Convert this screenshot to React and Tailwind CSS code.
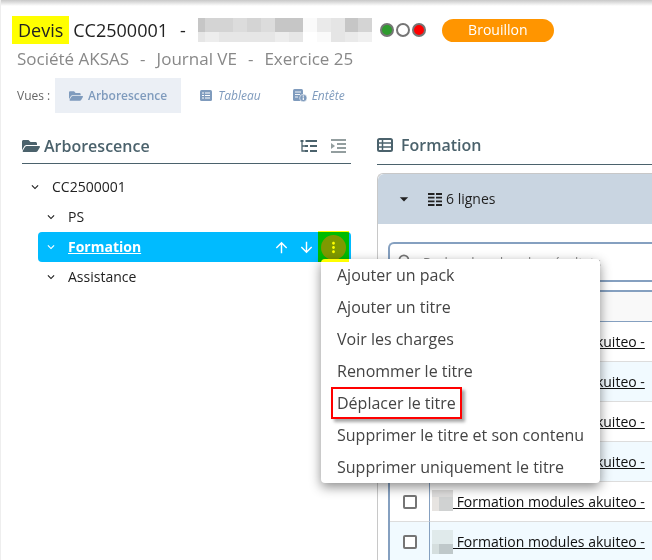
import { FaFolderOpen } from "react-icons/fa";
import { MdArrowUpward, MdArrowDownward, MdMoreVert, MdSearch, MdKeyboardArrowDown, MdArrowDropDown } from "react-icons/md";

const menuItems = [
  "Ajouter un pack",
  "Ajouter un titre",
  "Voir les charges",
  "Renommer le titre",
  "Déplacer le titre",
  "Supprimer le titre et son contenu",
  "Supprimer uniquement le titre",
];

const lines = [1, 2, 3, 4, 5, 6];

function ListIcon({ className }) {
  return (
    <svg viewBox="0 0 16 14" className={className} fill="none" stroke="currentColor" aria-hidden="true">
      <rect x="1" y="1" width="14" height="12" rx="1.5" strokeWidth="2" />
      <path d="M5.5 1v12M1 5h14M1 9h14" strokeWidth="1.5" />
    </svg>
  );
}

function SolidListIcon({ className }) {
  return (
    <svg viewBox="0 0 12 11" className={className} aria-hidden="true">
      <rect width="12" height="11" rx="1.5" fill="currentColor" />
      <path d="M2 3h2M5 3h5M2 5.500h2M5 5.500h5M2 8h2M5 8h5" stroke="#fff" strokeWidth="1.200" />
    </svg>
  );
}

function HeaderDocIcon({ className }) {
  return (
    <svg viewBox="0 0 14 13" className={className} aria-hidden="true">
      <rect width="10" height="12" rx="1.5" fill="currentColor" />
      <path d="M2 3h6M2 5.500h5M2 8h3" stroke="#fff" strokeWidth="0.900" />
      <circle cx="10.300" cy="9" r="3.700" fill="currentColor" stroke="#fff" strokeWidth="0.600" />
      <path d="M10.300 8.500v2.600M10.300 6.600v1.100" stroke="#fff" strokeWidth="1.200" />
    </svg>
  );
}

function TreeIcon({ className }) {
  return (
    <svg viewBox="0 0 17 14" className={className} stroke="currentColor" fill="none" aria-hidden="true">
      <path d="M2 1v11h4M2 7h4" strokeWidth="1.300" />
      <path d="M0.500 2h3M5 7h3M5 12h3M5.500 2H17M10 7h7M10 12h7" strokeWidth="2" />
    </svg>
  );
}

function IndentIcon({ className }) {
  return (
    <svg viewBox="0 0 15 14" className={className} stroke="currentColor" fill="none" aria-hidden="true">
      <path d="M0 1h15M6 5h9M6 9h9M0 13h15" strokeWidth="1.800" />
      <path d="M0 4l4 3-4 3z" fill="currentColor" stroke="none" />
    </svg>
  );
}

function LinesIcon({ className }) {
  return (
    <svg viewBox="0 0 14 13" className={className} stroke="currentColor" aria-hidden="true">
      <path d="M0 1h6.500M0 4.700h6.500M0 8.300h6.500M0 12h6.500M8 1h6M8 4.700h6M8 8.300h6M8 12h6" strokeWidth="1.800" />
    </svg>
  );
}

function TitleMask() {
  return (
    <svg viewBox="0 0 174 24" className="h-6 w-[174px]" shapeRendering="crispEdges" aria-hidden="true">
      <path fill="#d4d4d4" d="M7 0h28v14H7zM49 0h14v14H49zM167 0h7v14h-7z" />
      <path fill="#c6c6c6" d="M0 0h7v14H0zM77 0h28v14H77zM147 0h13v14h-13z" />
      <path fill="#dcdcdc" d="M35 0h14v14H35zM63 0h14v14H63z" />
      <path fill="#d4d4d4" d="M160 0h14v14h-14z" />
      <path fill="#e6e6e6" d="M0 14h7v10H0zM21 14h56v10H21zM91 14h14v10H91z" />
      <path fill="#ededed" d="M7 14h14v10H7zM77 14h14v10H77z" />
      <path fill="#fafafa" d="M105 0h14v14h-14zM119 14h14v10h-14z" />
      <path fill="#eaeaea" d="M119 0h14v14h-14zM147 14h13v10h-13z" />
      <path fill="#e5e5e5" d="M133 0h14v24h-14z" />
      <path fill="#f0f0f0" d="M160 14h14v10h-14z" />
    </svg>
  );
}

function CodeMask({ tinted }) {
  return (
    <svg viewBox="0 0 21 24" className="h-6 w-[21px] shrink-0" shapeRendering="crispEdges" aria-hidden="true">
      <path fill={tinted ? "#e0eaeb" : "#dddcdb"} d="M0 0h21v14H0z" />
      <path fill={tinted ? "#d5dede" : "#e7e4e1"} d={tinted ? "M0 14h7v10H0z" : "M0 7h7v14H0z"} />
      <path fill={tinted ? "#bfc8ca" : "#d0d2d2"} d={tinted ? "M7 14h14v10H7z" : "M7 7h14v14H7z"} />
    </svg>
  );
}

function TreeRow({ label, className }) {
  return (
    <li className={`flex h-[30px] items-center text-[#222] ${className}`}>
      <button type="button" aria-label={`Replier ${label}`} className="w-6">
        <MdKeyboardArrowDown className="size-[14px]" />
      </button>
      <span>{label}</span>
    </li>
  );
}

function ContextMenu() {
  return (
    <ul className="absolute top-[27px] left-[3px] z-10 w-[279px] rounded-sm bg-white text-base font-normal text-[#444] shadow-[0_4px_12px_rgba(0,0,0,0.45)]">
      {menuItems.map((item) => (
        <li key={item} className="flex h-8 items-center px-[10px]">
          <button
            type="button"
            className={
              item === "Déplacer le titre"
                ? "h-8 border-2 border-[#f00] px-1 whitespace-nowrap shadow-[3px_3px_3px_rgba(0,0,0,0.35)]"
                : "h-8 px-[6px] whitespace-nowrap"
            }
          >
            {item}
          </button>
        </li>
      ))}
    </ul>
  );
}

export default function App() {
  return (
    <div className="h-screen overflow-hidden border-l border-[#eee] bg-white font-['Open_Sans','Noto_Sans',sans-serif] text-sm">
      <div className="h-[6px] bg-gradient-to-b from-[#c8c8c8] to-white" />

      <header className="px-[11px] pt-[10px]">
        <div className="flex h-7 items-center text-lg text-[#222]">
          <h1 className="flex items-center gap-1">
            <span className="h-7 bg-[#ff0] px-[6px]">Devis</span>
            <span>CC2500001</span>
            <span className="pl-2">-</span>
          </h1>
          <div className="pl-3">
            <TitleMask />
          </div>
          <div className="flex gap-[2px] pl-2">
            <span className="size-[14px] rounded-full border-2 border-[#757575] bg-[#2e9b2e]" />
            <span className="size-[14px] rounded-full border-2 border-[#757575] bg-white" />
            <span className="size-[14px] rounded-full border-2 border-[#757575] bg-[#f00]" />
          </div>
          <span className="ml-4 flex h-[23px] w-28 items-center justify-center rounded-full bg-[#ff9500] text-sm text-white">
            Brouillon
          </span>
        </div>
        <p className="flex gap-[11px] px-[5px] pt-[3px] text-[17px] leading-6 text-[#888]">
          <span>Société AKSAS</span>
          <span>-</span>
          <span>Journal VE</span>
          <span>-</span>
          <span>Exercice 25</span>
        </p>
        <nav className="flex items-center px-[5px] pt-[7px] text-xs text-[#7f9bbd]">
          <span className="w-[38px] text-[#666]">Vues :</span>
          <button type="button" className="flex h-[35px] items-center gap-[5px] bg-[#ebeff5] px-[14px] font-semibold">
            <FaFolderOpen className="size-[14px]" />
            Arborescence
          </button>
          <button type="button" className="flex h-[35px] items-center gap-[6px] pl-[19px] italic">
            <SolidListIcon className="h-[11px] w-3" />
            Tableau
          </button>
          <button type="button" className="flex h-[35px] items-center gap-[5px] pl-8 italic">
            <HeaderDocIcon className="h-[13px] w-[14px]" />
            Entête
          </button>
        </nav>
      </header>

      <main className="flex gap-[26px] pt-5 pl-[21px]">
        <section className="w-[329px] shrink-0">
          <div className="flex h-[31px] items-center border-b border-[#4b626c] pb-1 text-[#4b626c]">
            <FaFolderOpen className="size-[18px]" />
            <h2 className="flex-1 pl-1 text-base font-semibold">Arborescence</h2>
            <button type="button" aria-label="Tout déplier">
              <TreeIcon className="h-[14px] w-[17px]" />
            </button>
            <button type="button" aria-label="Indenter" className="pr-[5px] pl-[14px] text-[#939e9f]">
              <IndentIcon className="h-[14px] w-[15px]" />
            </button>
          </div>

          <ul className="pt-2">
            <TreeRow label="CC2500001" className="pl-[6px]" />
            <TreeRow label="PS" className="pl-[22px]" />
            <li className="ml-4 flex h-[30px] items-center rounded-sm bg-[#0bf] pl-[6px] font-bold text-white">
              <button type="button" aria-label="Replier Formation" className="w-6">
                <MdKeyboardArrowDown className="size-[14px]" />
              </button>
              <a href="#formation" className="flex-1 underline">Formation</a>
              <button type="button" aria-label="Monter" className="px-1">
                <MdArrowUpward className="size-[17px]" />
              </button>
              <button type="button" aria-label="Descendre" className="pr-[3px] pl-1">
                <MdArrowDownward className="size-[17px]" />
              </button>
              <div className="relative mr-[2px] flex h-[30px] w-[31px] items-center justify-center">
                <button type="button" aria-label="Plus d'actions" className="flex size-[25px] items-center justify-center rounded-full bg-[#7f9999]">
                  <MdMoreVert className="size-[17px]" />
                </button>
                <ContextMenu />
                {/* highlighter mark over the button and the menu's corner */}
                <span className="pointer-events-none absolute inset-x-0 -top-px z-20 h-[31px] bg-[#ff0] mix-blend-multiply" />
              </div>
            </li>
            <TreeRow label="Assistance" className="pl-[22px]" />
          </ul>
        </section>

        <section className="min-w-0 flex-1">
          <div className="flex h-8 items-center gap-2 border-b border-[#4b626c] pb-2 text-[#4b626c]">
            <ListIcon className="h-[14px] w-4" />
            <h2 className="text-base font-semibold">Formation</h2>
          </div>

          <div className="mt-2 rounded-tl-md border-t border-l border-[#c8c8c8]">
            <div className="flex h-[50px] items-center rounded-tl-md bg-[#c9d5e1] pl-4 text-[#222]">
              <button type="button" aria-label="Replier les lignes" className="pr-[14px]">
                <MdArrowDropDown className="size-5" />
              </button>
              <LinesIcon className="h-[13px] w-[14px]" />
              <span className="pl-1">6 lignes</span>
            </div>
            <div className="pt-[18px] pl-[10px]">
              <label className="flex h-10 items-center gap-[7px] rounded-l-md border-y-2 border-l-2 border-[#85a0c0] pl-[6px] text-[#777]">
                <MdSearch className="size-5 shrink-0" />
                <input
                  type="search"
                  aria-label="Rechercher"
                  placeholder="Rechercher dans les résultats"
                  className="min-w-0 flex-1 text-[13px] outline-none placeholder:text-[#888]"
                />
              </label>
              <table className="mt-2 w-full table-fixed border-separate border-spacing-0 border-t-2 border-l-2 border-[#85a0c0]">
                <thead>
                  <tr className="h-[30px] bg-[#f9f9f9]">
                    <th className="w-10 border-r border-b border-[#85a0c0]" />
                    <th className="border-b border-[#85a0c0]" />
                  </tr>
                </thead>
                <tbody>
                  {lines.map((n) => (
                    <tr key={n} className="h-10 even:bg-[#f1faff]">
                      <td className="border-r border-b border-r-[#85a0c0] border-b-[#ddd] p-0">
                        <input
                          type="checkbox"
                          aria-label={`Ligne ${n}`}
                          className="mx-auto block size-[14px] appearance-none rounded-xs border-2 border-[#757575] bg-white"
                        />
                      </td>
                      <td className="border-b border-[#ddd] p-0 whitespace-nowrap">
                        <div className="flex items-center pl-[2px]">
                          <CodeMask tinted={n % 2 === 0} />
                          <a href="#ligne" className="text-[#111] underline">
                            &nbsp;Formation modules akuiteo -
                          </a>
                        </div>
                      </td>
                    </tr>
                  ))}
                </tbody>
              </table>
            </div>
          </div>
        </section>
      </main>
    </div>
  );
}
